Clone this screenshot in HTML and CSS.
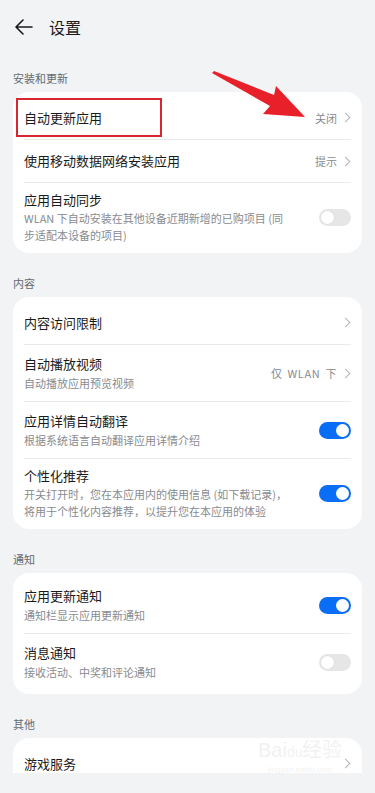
FILE: index.html
```html
<!DOCTYPE html>
<html lang="zh-CN">
<head>
<meta charset="utf-8">
<title>设置</title>
<link rel="stylesheet" href="styles.css">
</head>
<body>
<div class="screen">
  <div class="scroll">
    <header class="header">
      <svg class="back" width="18" height="16" viewBox="0 0 18 16"><path d="M8 1 L1 8 L8 15 M1 8 H17" fill="none" stroke="#1a1a1a" stroke-width="1.6" stroke-linecap="round" stroke-linejoin="round"/></svg>
      <span class="title">设置</span>
    </header>

    <div class="label first">安装和更新</div>
    <div class="card">
      <div class="row one">
        <div class="main"><div class="t">自动更新应用</div></div>
        <div class="val">关闭<span class="chev"></span></div>
      </div>
      <div class="row one">
        <div class="main"><div class="t">使用移动数据网络安装应用</div></div>
        <div class="val">提示<span class="chev"></span></div>
      </div>
      <div class="row three">
        <div class="main"><div class="t">应用自动同步</div><div class="s">WLAN 下自动安装在其他设备近期新增的已购项目 (同步适配本设备的项目)</div></div>
        <span class="sw off"></span>
      </div>
    </div>

    <div class="label">内容</div>
    <div class="card">
      <div class="row one">
        <div class="main"><div class="t">内容访问限制</div></div>
        <div class="val"><span class="chev"></span></div>
      </div>
      <div class="row two">
        <div class="main"><div class="t">自动播放视频</div><div class="s">自动播放应用预览视频</div></div>
        <div class="val wide">仅 WLAN 下<span class="chev"></span></div>
      </div>
      <div class="row two">
        <div class="main"><div class="t">应用详情自动翻译</div><div class="s">根据系统语言自动翻译应用详情介绍</div></div>
        <span class="sw on"></span>
      </div>
      <div class="row three">
        <div class="main"><div class="t">个性化推荐</div><div class="s">开关打开时，您在本应用内的使用信息 (如下载记录)，将用于个性化内容推荐，以提升您在本应用的体验</div></div>
        <span class="sw on"></span>
      </div>
    </div>

    <div class="label">通知</div>
    <div class="card">
      <div class="row two">
        <div class="main"><div class="t">应用更新通知</div><div class="s">通知栏显示应用更新通知</div></div>
        <span class="sw on"></span>
      </div>
      <div class="row two">
        <div class="main"><div class="t">消息通知</div><div class="s">接收活动、中奖和评论通知</div></div>
        <span class="sw off"></span>
      </div>
    </div>

    <div class="label">其他</div>
    <div class="card">
      <div class="row one">
        <div class="main"><div class="t">游戏服务</div></div>
        <div class="val"><span class="chev"></span></div>
      </div>
    </div>
  </div>
  <div class="bottom"></div>

  <div class="redbox"></div>
  <svg class="arrow" width="100" height="52" viewBox="0 0 100 52"><polygon points="0,2 2,0 62,24 64,15 93,46 51,43 58,35" fill="#e8202a"/></svg>
  <div class="wm"><div class="wm1">Bai<span class="du">du</span>经验</div><div class="wm2">jingyan.baidu.com</div></div>
</div>
</body>
</html>
```
FILE: styles.css
```css
* { box-sizing: border-box; }
html, body { margin: 0; padding: 0; }
body {
  background: #f1f3f5;
  font-family: "Noto Sans CJK SC", "Noto Sans", sans-serif;
  color: #1a1a1a;
}
.screen { position: relative; width: 375px; height: 793px; overflow: hidden; }
.scroll { height: 773px; overflow: hidden; }
.bottom { height: 20px; background: #f1f3f5; }

.header { height: 54px; display: flex; align-items: center; padding: 0 0 0 15px; }
.back { display: block; }
.title { margin-left: 16px; font-size: 16px; line-height: 20px; color: #1a1a1a; }

.label { padding: 22px 0 6px 13px; font-size: 11px; line-height: 16px; color: #666a70; }
.label.first { padding-top: 16px; }

.card { margin: 0 13px; background: #fff; border-radius: 16px; padding: 4px 11px; }
.row { display: flex; align-items: center; border-top: 1px solid #e9eaec; }
.row:first-child { border-top: none; }
.row.one { height: 43px; }
.row.two { padding: 9px 0; }
.row.three { padding: 7px 0 5px; }
.main { flex: 1; min-width: 0; }
.t { font-size: 13px; line-height: 20px; color: #1a1a1a; }
.s { font-size: 11px; line-height: 18px; color: #888b90; }
.row.three .s { line-height: 17px; padding-right: 14px; }
.val { display: flex; align-items: center; font-size: 11px; color: #888b90; white-space: nowrap; margin-left: 10px; }
.val.wide { letter-spacing: 0.6px; word-spacing: 2px; }
.chev { display: inline-block; width: 7px; height: 7px; border-top: 1px solid #b0b3b8; border-right: 1px solid #b0b3b8; transform: rotate(45deg); margin: 0 2px 0 5px; }

.sw { position: relative; flex: none; width: 32px; height: 17px; border-radius: 9px; margin-left: 12px; }
.sw::after { content: ""; position: absolute; top: 2px; width: 13px; height: 13px; border-radius: 50%; background: #fff; }
.sw.on { background: #0a6df5; }
.sw.on::after { right: 2px; }
.sw.off { background: #e6e6e6; }
.sw.off::after { left: 2px; box-shadow: 0 0 0 0.5px #dcdcdc; }

.redbox { position: absolute; left: 16px; top: 98px; width: 146px; height: 39px; border: 2px solid #d7262e; }
.arrow { position: absolute; left: 212px; top: 71px; }

.wm { position: absolute; left: 258px; top: 738px; color: rgba(225, 225, 225, 0.45); text-align: center; }
.wm1 { font-family: "Liberation Sans", sans-serif; font-size: 20px; line-height: 24px; }
.du { font-size: 14px; }
.wm2 { font-family: "Liberation Sans", sans-serif; font-size: 8px; line-height: 12px; }
```
